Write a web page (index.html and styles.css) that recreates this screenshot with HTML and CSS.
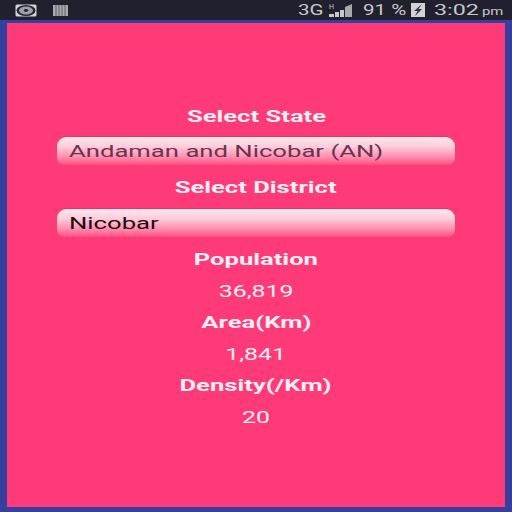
FILE: index.html
```html
<!DOCTYPE html>
<html lang="en">
<head>
  <meta charset="UTF-8" />
  <title>Population Lookup</title>
  <link rel="stylesheet" href="styles.css">
</head>
<body>

  <header class="status-bar">
    <div class="status-left">
      <svg class="icon-disc" viewBox="0 0 22 13">
        <rect x="0.5" y="0.5" width="21" height="12" rx="1.5" fill="#d4d4d8"/>
        <ellipse cx="11" cy="6.5" rx="9.5" ry="5.6" fill="#26273a"/>
        <ellipse cx="11" cy="6.5" rx="7" ry="4" fill="#a0a0a6"/>
        <ellipse cx="11" cy="6.5" rx="2.2" ry="1.4" fill="#26273a"/>
      </svg>
      <svg class="icon-bars" viewBox="0 0 15 11">
        <rect width="15" height="11" fill="#a9a9b0"/>
        <path d="M3 0v11M6 0v11M9 0v11M12 0v11" stroke="#4a4b5c" stroke-width="0.8"/>
      </svg>
    </div>
    <div class="status-right">
      <span class="stat net"><span>3G</span></span>
      <svg class="icon-signal" viewBox="0 0 23 13">
        <text x="0" y="5" class="net-h">H</text>
        <path d="M0 10h5v3H0zM6 8h4v5H6zM11 6h4v7h-4z" fill="#c8c8cc"/>
        <path d="M16 3l7-3v13h-7z" fill="#a8a8ae"/>
      </svg>
      <span class="stat pct"><span>91 %</span></span>
      <svg class="icon-battery" viewBox="0 0 14 14">
        <rect width="14" height="14" fill="#d2d2d4"/>
        <path d="M11 1L3 8h3.5L4 13l7-7H7.5z" fill="#33344a"/>
      </svg>
      <span class="stat clock"><span>3:02</span></span>
      <span class="stat ampm"><span>pm</span></span>
    </div>
  </header>

  <div class="frame">
    <main class="panel">
      <h2 class="label first"><span>Select State</span></h2>
      <div class="spinner muted"><span>Andaman and Nicobar (AN)</span></div>
      <h2 class="label"><span>Select District</span></h2>
      <div class="spinner"><span>Nicobar</span></div>
      <h2 class="label"><span>Population</span></h2>
      <p class="value"><span>36,819</span></p>
      <h2 class="label"><span>Area(Km)</span></h2>
      <p class="value"><span>1,841</span></p>
      <h2 class="label"><span>Density(/Km)</span></h2>
      <p class="value"><span>20</span></p>
    </main>
  </div>

</body>
</html>
```

FILE: styles.css
```css
* {
  margin: 0;
  padding: 0;
  box-sizing: border-box;
}

html, body {
  height: 100%;
}

body {
  display: flex;
  flex-direction: column;
  font-family: Roboto, sans-serif;
  background-color: #363f9e;
}

.status-bar {
  height: 20px;
  background-color: #20202f;
  color: #c8c8cc;
  display: flex;
  justify-content: space-between;
  align-items: center;
  padding: 0 9px 0 15px;
}

.status-left {
  display: flex;
  align-items: center;
  gap: 16px;
}

.icon-disc {
  width: 22px;
  height: 13px;
}

.icon-bars {
  width: 15px;
  height: 11px;
}

.status-right {
  display: flex;
  align-items: center;
}

/* the whole screenshot is stretched sideways, so text gets scaled too */
.stat {
  font-size: 15px;
  white-space: nowrap;
}

.stat span {
  display: inline-block;
  transform-origin: left center;
}

.net {
  width: 26px;
}

.net span {
  transform: scaleX(1.37);
}

.net-h {
  font-family: Roboto, sans-serif;
  font-size: 7px;
  fill: #c8c8cc;
}

.icon-signal {
  width: 23px;
  height: 13px;
  margin-left: 5px;
}

.pct {
  width: 41px;
  margin-left: 11px;
}

.pct span {
  transform: scaleX(1.37);
}

.icon-battery {
  width: 14px;
  height: 14px;
  margin-left: 7px;
}

.clock {
  width: 43px;
  margin-left: 9px;
}

.clock span {
  transform: scaleX(1.55);
}

.ampm {
  width: 21px;
  margin-left: 5px;
  padding-top: 3px;
  font-size: 11px;
}

.ampm span {
  transform: scaleX(1.35);
}

.frame {
  flex: 1;
  padding: 3px 7px 5px 7px;
}

.panel {
  height: 100%;
  background-color: #ff3a78;
  display: flex;
  flex-direction: column;
  align-items: center;
  padding: 83px 50px 0;
  color: #fdeef3;
}

.label {
  font-size: 16px;
  font-weight: 700;
  line-height: 22px;
}

.label span {
  display: inline-block;
  transform: scaleX(1.6);
}

.value {
  font-size: 16px;
  font-weight: 400;
  line-height: 22px;
  margin: 10px 0 9px;
}

.value span {
  display: inline-block;
  transform: scaleX(1.55);
}

.spinner {
  width: 100%;
  height: 28px;
  margin: 10px 0 12px;
  padding-left: 12px;
  display: flex;
  align-items: center;
  border-radius: 9px 9px 7px 7px;
  background: linear-gradient(#ffe8ef 0%, #ffcbda 35%, #ff90b0 70%, #ff4d82 100%);
  box-shadow: 0 -1px 0 rgba(190, 30, 85, 0.3);
  color: #1e0a14;
  font-size: 17px;
  white-space: nowrap;
}

.spinner span {
  display: inline-block;
  transform-origin: left center;
  transform: scaleX(1.51);
}

.spinner.muted {
  margin-top: 9px;
  color: #6b3350;
}
```
